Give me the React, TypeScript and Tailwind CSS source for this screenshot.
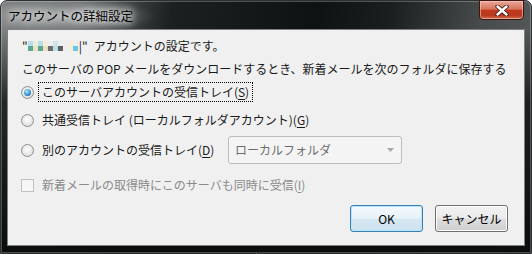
import React from "react";

const font = "font-['Noto_Sans_CJK_JP','Noto_Sans',sans-serif]";

function Radio({ checked }: { checked?: boolean }) {
  return (
    <span className="w-[13px] h-[13px] shrink-0 rounded-full border border-[#8e8f8f] bg-[radial-gradient(circle_at_50%_40%,#ffffff_0%,#e6e6e6_60%,#d2d2d2_100%)] flex items-center justify-center">
      {checked && (
        <span className="w-[7px] h-[7px] rounded-full bg-[radial-gradient(circle_at_40%_35%,#b5ecff_0%,#3a93d6_55%,#1a4e86_100%)]" />
      )}
    </span>
  );
}

function RadioRow({
  label,
  hotkey,
  checked,
  focused,
}: {
  label: string;
  hotkey: string;
  checked?: boolean;
  focused?: boolean;
}) {
  return (
    <div className="flex items-center h-[20px]">
      <Radio checked={checked} />
      <span
        className={
          "ml-[4px] px-[3px] h-[20px] flex items-center border border-dotted " +
          (focused ? "border-black" : "border-transparent")
        }
      >
        {label}(<span className="underline underline-offset-2">{hotkey}</span>)
      </span>
    </div>
  );
}

// pixelated (blurred-out) account name
const blocks: [string, string][] = [
  ["#bcdde6", "#5ea596"],
  ["#e9efdf", "#e9e4c6"],
  ["#bcdde6", "#5ea596"],
  ["#f3eed7", "#e8e0c0"],
  ["#eeeeee", "#6c6c6c"],
  ["#d0e4ea", "#b9dfe4"],
  ["#eeeeee", "#5c5c64"],
  ["#eeeeee", "#eeeeee"],
  ["#f4eedc", "#f4eedc"],
  ["#eeeeee", "#6ac6e6"],
];

function CloseGlyph() {
  return (
    <svg width="14" height="11" viewBox="0 0 14 11">
      <path d="M2.5 1.5 L11.5 9.5 M11.5 1.5 L2.5 9.5" stroke="#3a1a14" strokeWidth="4.2" strokeLinecap="round" />
      <path d="M2.5 1.5 L11.5 9.5 M11.5 1.5 L2.5 9.5" stroke="#ffffff" strokeWidth="2.4" strokeLinecap="round" />
    </svg>
  );
}

export default function App() {
  return (
    <div className={"w-[532px] h-[254px] bg-white " + font}>
      <div className="w-full h-full rounded-t-[7px] border border-[#2c3030] shadow-[inset_0_0_0_1px_rgba(255,255,255,0.25)] bg-[radial-gradient(ellipse_90px_18px_at_65px_15px,rgba(200,204,204,0.55)_0%,rgba(200,204,204,0)_100%),linear-gradient(to_bottom,rgba(10,12,12,0)_0%,rgba(10,12,12,0)_12%,rgba(10,12,12,0.75)_40%,#0b0d0d_100%),linear-gradient(100deg,#7e8282_0%,#666a6a_14%,#1c2020_30%,#0e1212_55%,#1a1e1e_68%,#474b4b_84%,#5c6060_100%)] flex flex-col px-[6px] pb-[7px]">
        <div className="h-[28px] shrink-0 flex items-start">
          <span className="ml-[1px] mt-[6px] text-[12.5px] leading-[18px] text-black [text-shadow:0_0_6px_#ffffff,0_0_10px_rgba(255,255,255,0.9),0_0_14px_rgba(255,255,255,0.7)]">
            アカウントの詳細設定
          </span>
          <div className="ml-auto mr-[1px] mt-[-1px] w-[45px] h-[20px] rounded-b-[4px] border border-[#3b1610] shadow-[inset_0_0_0_1px_rgba(255,210,200,0.55)] bg-[linear-gradient(to_bottom,#e9a898_0%,#d7735c_45%,#c2381c_52%,#b83a20_80%,#d0704e_100%)] flex items-center justify-center">
            <CloseGlyph />
          </div>
        </div>
        <div className="flex-1 border border-[#7c8080] bg-[#f0f0f0] text-[12px] text-[#1a1a1a] flex flex-col pl-[13px] pt-[6px]">
          <div className="h-[20px] flex items-center ml-[1px]">
            <span>"</span>
            <span className="flex">
              {blocks.map(([t, b], i) => (
                <span key={i} className="flex flex-col w-[5px]">
                  <span className="h-[5px]" style={{ background: t }} />
                  <span className="h-[5px]" style={{ background: b }} />
                </span>
              ))}
            </span>
            <span className="ml-[1px]">|"</span>
            <span className="ml-[6px]">アカウントの設定です。</span>
          </div>
          <div className="h-[20px] flex items-center ml-[1px] mt-[3px] whitespace-nowrap">
            このサーバの POP メールをダウンロードするとき、新着メールを次のフォルダに保存する
          </div>
          <div className="mt-[3px]">
            <RadioRow label="このサーバアカウントの受信トレイ" hotkey="S" checked focused />
          </div>
          <div className="mt-[8px]">
            <RadioRow label="共通受信トレイ (ローカルフォルダアカウント)" hotkey="G" />
          </div>
          <div className="mt-[6px] h-[28px] flex items-center">
            <div className="w-[207px]">
              <RadioRow label="別のアカウントの受信トレイ" hotkey="D" />
            </div>
            <div className="w-[174px] h-[28px] rounded-[3px] border border-[#bcbcbc] bg-[#f4f4f4] flex items-center pl-[6px] pr-[7px] text-[#6d6d6d]">
              ローカルフォルダ
              <svg className="ml-auto" width="7" height="4" viewBox="0 0 7 4">
                <path d="M0 0 L7 0 L3.5 4 Z" fill="#a8a8a8" />
              </svg>
            </div>
          </div>
          <div className="mt-[11px] h-[20px] flex items-center text-[#8a8a8a]">
            <span className="w-[13px] h-[13px] shrink-0 border border-[#c2c2c2] bg-[#f6f6f6]" />
            <span className="ml-[8px]">
              新着メールの取得時にこのサーバも同時に受信(<span className="underline underline-offset-2">I</span>)
            </span>
          </div>
          <div className="mt-[10px] flex justify-end pr-[16px] gap-[12px]">
            <button className="w-[73px] h-[27px] rounded-[3px] border border-[#3c7fb1] shadow-[inset_0_0_0_1px_#b8e4fb] bg-[linear-gradient(to_bottom,#f4f9fc_0%,#e8f2f9_48%,#d6e7f3_52%,#cfe2f0_100%)] text-[12px] text-black">
              OK
            </button>
            <button className="w-[73px] h-[27px] rounded-[3px] border border-[#707070] shadow-[inset_0_0_0_1px_#fcfcfc] bg-[linear-gradient(to_bottom,#f2f2f2_0%,#ebebeb_48%,#dddddd_52%,#cfcfcf_100%)] text-[12px] text-black">
              キャンセル
            </button>
          </div>
        </div>
      </div>
    </div>
  );
}
